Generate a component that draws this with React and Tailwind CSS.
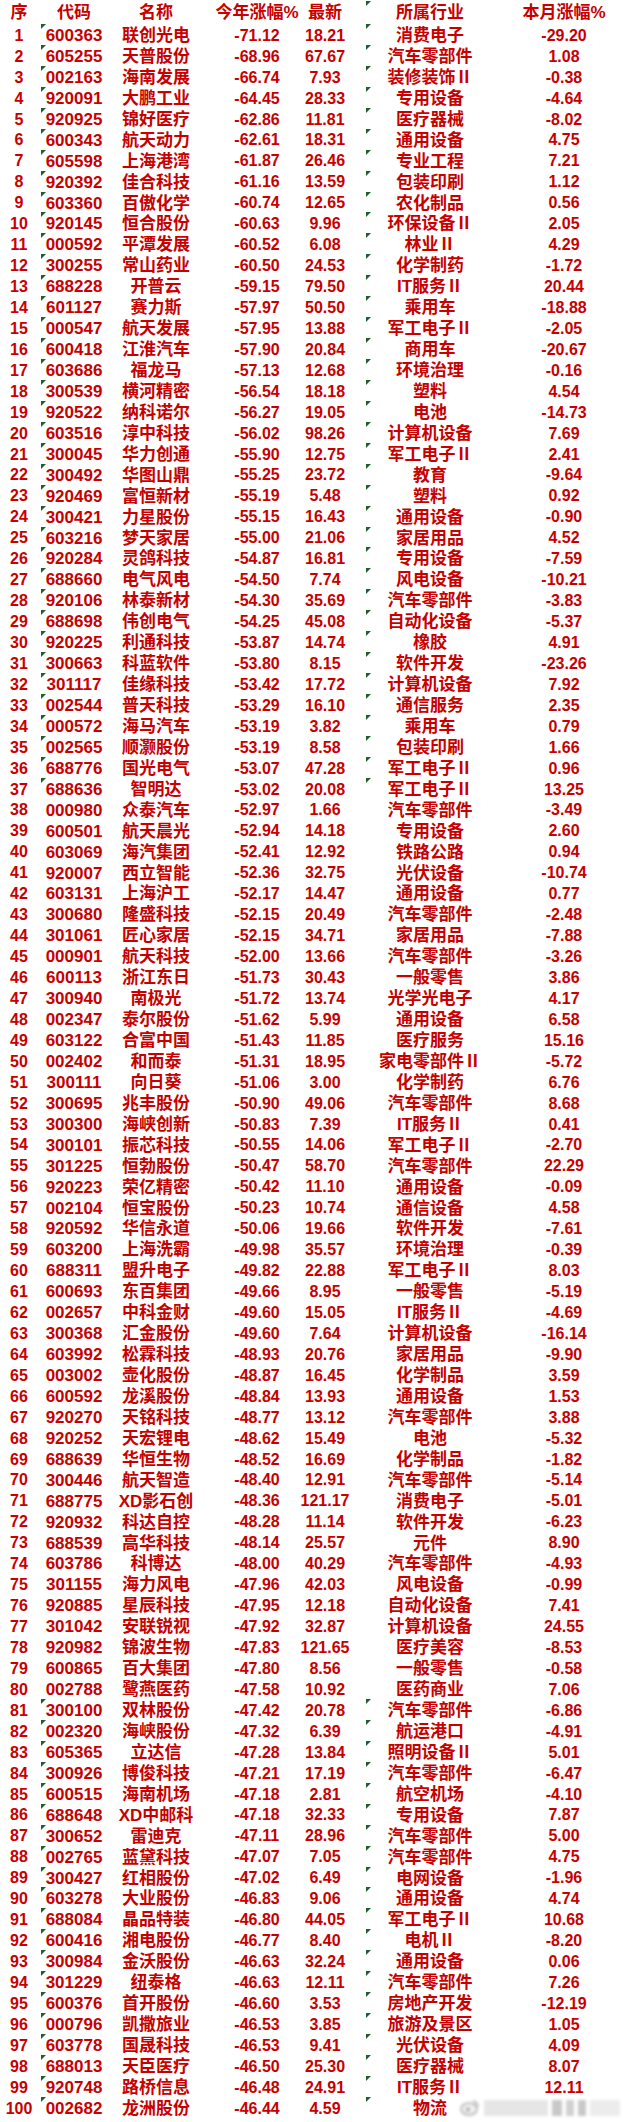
import React from "react";

const raw = `1|600363|联创光电|-71.12|18.21|消费电子|-29.20
2|605255|天普股份|-68.96|67.67|汽车零部件|1.08
3|002163|海南发展|-66.74|7.93|装修装饰Ⅱ|-0.38
4|920091|大鹏工业|-64.45|28.33|专用设备|-4.64
5|920925|锦好医疗|-62.86|11.81|医疗器械|-8.02
6|600343|航天动力|-62.61|18.31|通用设备|4.75
7|605598|上海港湾|-61.87|26.46|专业工程|7.21
8|920392|佳合科技|-61.16|13.59|包装印刷|1.12
9|603360|百傲化学|-60.74|12.65|农化制品|0.56
10|920145|恒合股份|-60.63|9.96|环保设备Ⅱ|2.05
11|000592|平潭发展|-60.52|6.08|林业Ⅱ|4.29
12|300255|常山药业|-60.50|24.53|化学制药|-1.72
13|688228|开普云|-59.15|79.50|IT服务Ⅱ|20.44
14|601127|赛力斯|-57.97|50.50|乘用车|-18.88
15|000547|航天发展|-57.95|13.88|军工电子Ⅱ|-2.05
16|600418|江淮汽车|-57.90|20.84|商用车|-20.67
17|603686|福龙马|-57.13|12.68|环境治理|-0.16
18|300539|横河精密|-56.54|18.18|塑料|4.54
19|920522|纳科诺尔|-56.27|19.05|电池|-14.73
20|603516|淳中科技|-56.02|98.26|计算机设备|7.69
21|300045|华力创通|-55.90|12.75|军工电子Ⅱ|2.41
22|300492|华图山鼎|-55.25|23.72|教育|-9.64
23|920469|富恒新材|-55.19|5.48|塑料|0.92
24|300421|力星股份|-55.15|16.43|通用设备|-0.90
25|603216|梦天家居|-55.00|21.06|家居用品|4.52
26|920284|灵鸽科技|-54.87|16.81|专用设备|-7.59
27|688660|电气风电|-54.50|7.74|风电设备|-10.21
28|920106|林泰新材|-54.30|35.69|汽车零部件|-3.83
29|688698|伟创电气|-54.25|45.08|自动化设备|-5.37
30|920225|利通科技|-53.87|14.74|橡胶|4.91
31|300663|科蓝软件|-53.80|8.15|软件开发|-23.26
32|301117|佳缘科技|-53.42|17.72|计算机设备|7.92
33|002544|普天科技|-53.29|16.10|通信服务|2.35
34|000572|海马汽车|-53.19|3.82|乘用车|0.79
35|002565|顺灏股份|-53.19|8.58|包装印刷|1.66
36|688776|国光电气|-53.07|47.28|军工电子Ⅱ|0.96
37|688636|智明达|-53.02|20.08|军工电子Ⅱ|13.25
38|000980|众泰汽车|-52.97|1.66|汽车零部件|-3.49
39|600501|航天晨光|-52.94|14.18|专用设备|2.60
40|603069|海汽集团|-52.41|12.92|铁路公路|0.94
41|920007|西立智能|-52.36|32.75|光伏设备|-10.74
42|603131|上海沪工|-52.17|14.47|通用设备|0.77
43|300680|隆盛科技|-52.15|20.49|汽车零部件|-2.48
44|301061|匠心家居|-52.15|34.71|家居用品|-7.88
45|000901|航天科技|-52.00|13.66|汽车零部件|-3.26
46|600113|浙江东日|-51.73|30.43|一般零售|3.86
47|300940|南极光|-51.72|13.74|光学光电子|4.17
48|002347|泰尔股份|-51.62|5.99|通用设备|6.58
49|603122|合富中国|-51.43|11.85|医疗服务|15.16
50|002402|和而泰|-51.31|18.95|家电零部件Ⅱ|-5.72
51|300111|向日葵|-51.06|3.00|化学制药|6.76
52|300695|兆丰股份|-50.90|49.06|汽车零部件|8.68
53|300300|海峡创新|-50.83|7.39|IT服务Ⅱ|0.41
54|300101|振芯科技|-50.55|14.06|军工电子Ⅱ|-2.70
55|301225|恒勃股份|-50.47|58.70|汽车零部件|22.29
56|920223|荣亿精密|-50.42|11.10|通用设备|-0.09
57|002104|恒宝股份|-50.23|10.74|通信设备|4.58
58|920592|华信永道|-50.06|19.66|软件开发|-7.61
59|603200|上海洗霸|-49.98|35.57|环境治理|-0.39
60|688311|盟升电子|-49.82|22.88|军工电子Ⅱ|8.03
61|600693|东百集团|-49.66|8.95|一般零售|-5.19
62|002657|中科金财|-49.60|15.05|IT服务Ⅱ|-4.69
63|300368|汇金股份|-49.60|7.64|计算机设备|-16.14
64|603992|松霖科技|-48.93|20.76|家居用品|-9.90
65|003002|壶化股份|-48.87|16.45|化学制品|3.59
66|600592|龙溪股份|-48.84|13.93|通用设备|1.53
67|920270|天铭科技|-48.77|13.12|汽车零部件|3.88
68|920252|天宏锂电|-48.62|15.49|电池|-5.32
69|688639|华恒生物|-48.52|16.69|化学制品|-1.82
70|300446|航天智造|-48.40|12.91|汽车零部件|-5.14
71|688775|XD影石创|-48.36|121.17|消费电子|-5.01
72|920932|科达自控|-48.28|11.14|软件开发|-6.23
73|688539|高华科技|-48.14|25.57|元件|8.90
74|603786|科博达|-48.00|40.29|汽车零部件|-4.93
75|301155|海力风电|-47.96|42.03|风电设备|-0.99
76|920885|星辰科技|-47.95|12.18|自动化设备|7.41
77|301042|安联锐视|-47.92|32.87|计算机设备|24.55
78|920982|锦波生物|-47.83|121.65|医疗美容|-8.53
79|600865|百大集团|-47.80|8.56|一般零售|-0.58
80|002788|鹭燕医药|-47.58|10.92|医药商业|7.06
81|300100|双林股份|-47.42|20.78|汽车零部件|-6.86
82|002320|海峡股份|-47.32|6.39|航运港口|-4.91
83|605365|立达信|-47.28|13.84|照明设备Ⅱ|5.01
84|300926|博俊科技|-47.21|17.19|汽车零部件|-6.47
85|600515|海南机场|-47.18|2.81|航空机场|-4.10
86|688648|XD中邮科|-47.18|32.33|专用设备|7.87
87|300652|雷迪克|-47.11|28.96|汽车零部件|5.00
88|002765|蓝黛科技|-47.07|7.05|汽车零部件|4.75
89|300427|红相股份|-47.02|6.49|电网设备|-1.96
90|603278|大业股份|-46.83|9.06|通用设备|4.74
91|688084|晶品特装|-46.80|44.05|军工电子Ⅱ|10.68
92|600416|湘电股份|-46.77|8.40|电机Ⅱ|-8.20
93|300984|金沃股份|-46.63|32.24|通用设备|0.06
94|301229|纽泰格|-46.63|12.11|汽车零部件|7.26
95|600376|首开股份|-46.60|3.53|房地产开发|-12.19
96|000796|凯撒旅业|-46.53|3.85|旅游及景区|1.05
97|603778|国晟科技|-46.53|9.41|光伏设备|4.09
98|688013|天臣医疗|-46.50|25.30|医疗器械|8.07
99|920748|路桥信息|-46.48|24.91|IT服务Ⅱ|12.11
100|002682|龙洲股份|-46.44|4.59|物流|`;

const rows = raw.split("\n").map((l) => l.split("|"));

const num = { fontFamily: '"Liberation Sans", Arial, sans-serif' };
const cjk = { fontFamily: '"Liberation Sans", "Noto Sans CJK SC", sans-serif' };

function Tick({ className }) {
  return (
    <span
      className={
        "absolute top-[1px] w-0 h-0 border-t-[5px] border-t-[#1f5f2f] border-r-[5px] border-r-transparent " +
        className
      }
    />
  );
}

// columns centred at about 19, 74, 156, 257, 325, 430, 564
const grid = "grid grid-cols-[38px_72px_92px_110px_26px_184px_84px] items-center text-[#c80000]";
const cell = "relative h-full flex items-center justify-center whitespace-nowrap";

export default function App() {
  return (
    <div className="w-[624px] h-[2122px] bg-white relative overflow-hidden">
      <div className={grid + " h-[23px] text-[17px] font-bold"} style={cjk}>
        <div className={cell}>序</div>
        <div className={cell}>代码</div>
        <div className={cell}>名称</div>
        <div className={cell}>今年涨幅%</div>
        <div className={cell}>最新</div>
        <div className={cell}>
          <Tick className="left-[28px]" />
          所属行业
        </div>
        <div className={cell}>本月涨幅%</div>
      </div>

      {rows.map((r) => {
        const n = Number(r[0]);
        const marked = n <= 37 || n >= 81;
        return (
          <div key={r[0]} className={grid + " h-[20.95px] font-bold"}>
            <div className={cell + " text-[16px]"} style={num}>{r[0]}</div>
            <div className={cell + " text-[17px]"} style={num}>
              {marked && <Tick className="left-[3px]" />}
              {r[1]}
            </div>
            <div className={cell + " text-[17px]"} style={cjk}>{r[2]}</div>
            <div className={cell + " text-[16px]"} style={num}>{r[3]}</div>
            <div className={cell + " text-[16px]"} style={num}>{r[4]}</div>
            <div className={cell + " text-[17px]"} style={cjk}>
              {marked && <Tick className="left-[28px]" />}
              {r[5]}
            </div>
            <div className={cell + " text-[16px]"} style={num}>{r[6]}</div>
          </div>
        );
      })}

      {/* watermark over last row */}
      <div className="absolute left-[460px] top-[2097px] w-[164px] h-[22px] flex items-center gap-1 blur-[1.5px]">
        <svg width="20" height="18" viewBox="0 0 20 18">
          <ellipse cx="9" cy="10" rx="8" ry="6" fill="#f2f2f2" stroke="#b0b0b0" strokeWidth="1.6" />
          <circle cx="8" cy="10.5" r="2.2" fill="#b0b0b0" />
          <path d="M13 2 Q18 3 18 8" fill="none" stroke="#b0b0b0" strokeWidth="1.4" />
        </svg>
        <div className="h-[16px] w-[64px] bg-[#e6e6e6]" />
        <div className="h-[16px] w-[10px] bg-[#c8c8c8]" />
        <div className="h-[16px] w-[8px] bg-[#d0d0d0]" />
        <div className="h-[16px] w-[8px] bg-[#c8c8c8]" />
        <div className="h-[16px] w-[30px] bg-[#ececec]" />
      </div>
    </div>
  );
}
